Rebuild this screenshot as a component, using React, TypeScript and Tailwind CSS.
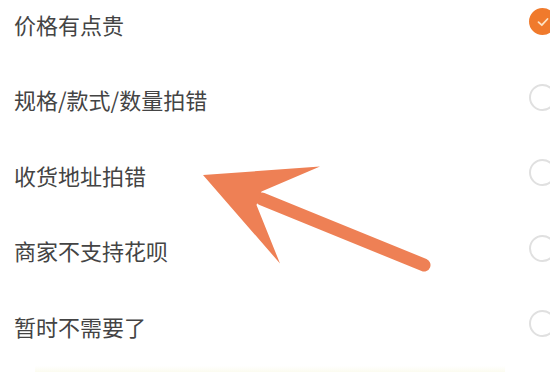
const reasons = [
  { label: "价格有点贵", checked: true },
  { label: "规格/款式/数量拍错", checked: false },
  { label: "收货地址拍错", checked: false },
  { label: "商家不支持花呗", checked: false },
  { label: "暂时不需要了", checked: false },
];

function Radio({ checked }: { checked: boolean }) {
  if (checked) {
    return (
      <span className="flex h-[27px] w-[27px] items-center justify-center rounded-full bg-[#f07a2c]">
        <svg width="14" height="14" viewBox="0 0 14 14" fill="none">
          <path
            d="M2.5 7.2 L5.8 10.2 L11.5 4"
            stroke="#fde3c4"
            strokeWidth="1.8"
            strokeLinecap="round"
            strokeLinejoin="round"
          />
        </svg>
      </span>
    );
  }
  return <span className="block h-[27px] w-[27px] rounded-full border-2 border-[#e0e0e0]" />;
}

export default function App() {
  return (
    <div
      className="relative h-[372px] w-[550px] overflow-hidden bg-white"
      style={{ fontFamily: '"Noto Sans CJK SC", "Noto Sans", sans-serif' }}
    >
      <ul className="-mt-[14px] flex flex-col">
        {reasons.map((r) => (
          <li key={r.label} className="flex h-[75.5px] items-center justify-between pl-[14px]">
            <span className="text-[22px] leading-none text-[#444444]">{r.label}</span>
            <span className="-mr-[6px] mb-[4px]">
              <Radio checked={r.checked} />
            </span>
          </li>
        ))}
      </ul>

      <div className="absolute bottom-0 left-[35px] h-[6px] w-[470px] bg-gradient-to-b from-white to-[#fcfcf0]" />

      {/* annotation arrow */}
      <svg className="pointer-events-none absolute left-0 top-0" width="550" height="372">
        <line x1="262" y1="199" x2="424" y2="265" stroke="#ee8055" strokeWidth="13" strokeLinecap="round" />
        <polygon
          points="203,175 320,166.5 261.5,191.5 256.5,205 280,263.5"
          fill="#ee8055"
          strokeLinejoin="round"
        />
      </svg>
    </div>
  );
}
